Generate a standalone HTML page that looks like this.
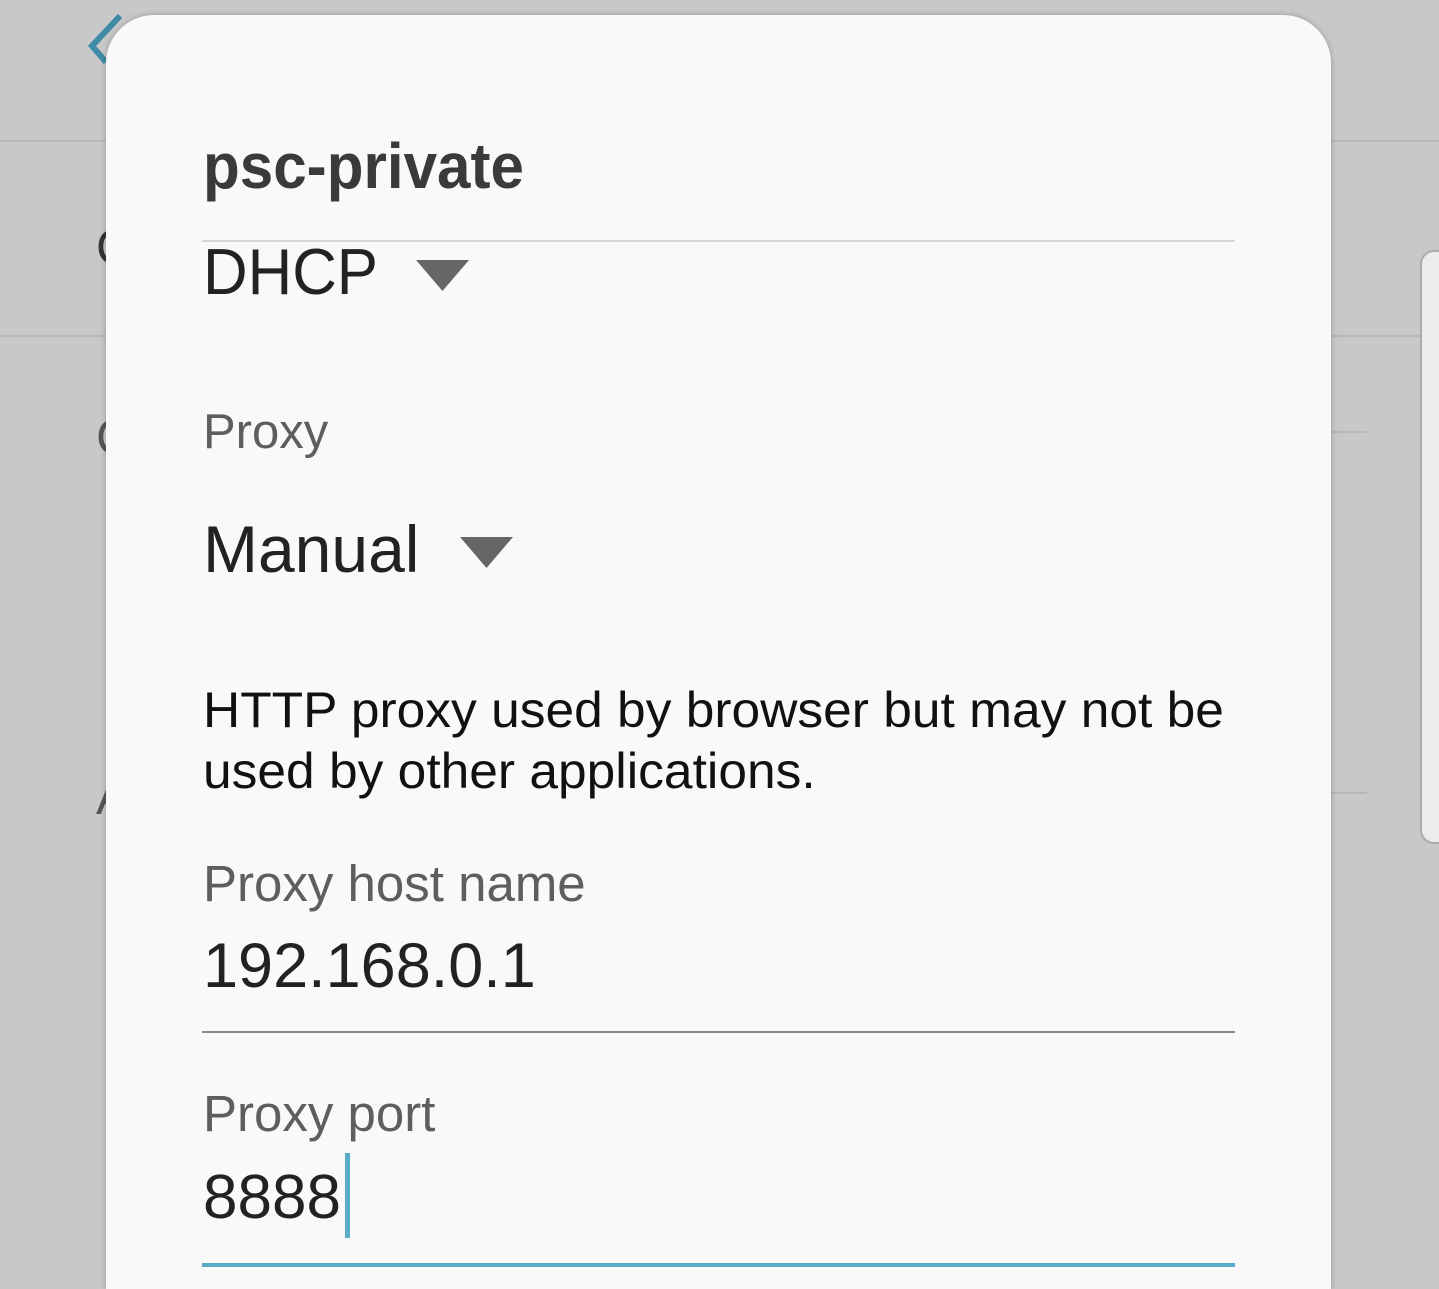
<!DOCTYPE html>
<html style="overflow:hidden;height:1289px"><head><meta charset="utf-8"><style>
body{margin:0;width:1439px;height:1289px;background:#c8c8c8;position:relative;overflow:hidden;font-family:"Liberation Sans",sans-serif}
.a{position:absolute;white-space:nowrap;line-height:1}
.ln{position:absolute;height:2px;background:#b8b8b8}
#dlg{position:absolute;left:106px;top:15px;width:1225px;height:1274px;background:#f9f9f9;border-radius:48px 48px 0 0;box-shadow:0 0 6px rgba(0,0,0,0.25)}
.lbl{font-size:51px;color:#5e5e5e}
.val{color:#222}
</style></head><body>
<div class="ln" style="left:0;top:140px;width:1439px"></div>
<div class="ln" style="left:0;top:335px;width:1439px"></div>
<div class="ln" style="left:1331px;top:431px;width:36px"></div>
<div class="ln" style="left:1331px;top:792px;width:36px"></div>
<svg class="a" style="left:80px;top:8px" width="60" height="70"><path d="M40 8 L12 38 L26 54" stroke="#3f8aa5" stroke-width="6" fill="none"/></svg>
<div class="a" style="left:96px;top:222px;font-size:50px;color:#333">C</div>
<div class="a" style="left:96px;top:412px;font-size:50px;color:#555">C</div>
<div class="a" style="left:96px;top:772px;font-size:50px;color:#555">A</div>
<div style="position:absolute;left:1420px;top:250px;width:40px;height:590px;background:#ececec;border:2px solid #aaa;border-radius:14px"></div>
<div id="dlg"></div>
<div class="a" style="left:203px;top:134px;font-size:64px;font-weight:bold;color:#3a3a3a;transform:scaleX(0.94);transform-origin:0 0">psc-private</div>
<div style="position:absolute;left:202px;top:240px;width:1033px;height:2px;background:#d6d6d6"></div>
<div class="a val" style="left:203px;top:239px;font-size:65px;transform:scaleX(0.95);transform-origin:0 0">DHCP</div>
<svg class="a" style="left:416px;top:260px" width="53" height="32"><path d="M0 0H53L26.5 31Z" fill="#666"/></svg>
<div class="a lbl" style="left:203px;top:408px;font-size:49px">Proxy</div>
<div class="a val" style="left:203px;top:516px;font-size:66px">Manual</div>
<svg class="a" style="left:460px;top:537px" width="53" height="32"><path d="M0 0H53L26.5 31Z" fill="#666"/></svg>
<div class="a" style="left:203px;top:680px;font-size:50px;color:#111;line-height:61px;transform:scaleX(1.03);transform-origin:0 0">HTTP proxy used by browser but may not be<br>used by other applications.</div>
<div class="a lbl" style="left:203px;top:858px">Proxy host name</div>
<div class="a val" style="left:203px;top:935px;font-size:63px">192.168.0.1</div>
<div style="position:absolute;left:202px;top:1031px;width:1033px;height:2px;background:#8a8a8a"></div>
<div class="a lbl" style="left:203px;top:1088px">Proxy port</div>
<div class="a val" style="left:203px;top:1167px;font-size:62px">8888</div>
<div style="position:absolute;left:345px;top:1153px;width:5px;height:85px;background:#5aaccb"></div>
<div style="position:absolute;left:202px;top:1263px;width:1033px;height:4px;background:#5aaccb"></div>
</body></html>
